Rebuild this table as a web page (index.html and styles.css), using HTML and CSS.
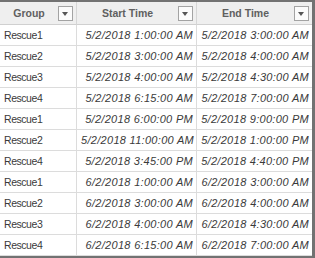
FILE: index.html
```html
<!DOCTYPE html>
<html lang="en">
<head>
    <meta charset="UTF-8">
    <title>Rescue schedule</title>
    <link rel="stylesheet" href="styles.css">
</head>
<body>
    <div class="frame">
        <div class="grid">
            <div class="head"><span class="label">Group</span><span class="drop"></span></div>
            <div class="head"><span class="label">Start Time</span><span class="drop"></span></div>
            <div class="head last"><span class="label">End Time</span><span class="drop"></span></div>

            <div class="cell">Rescue1</div><div class="cell date">5/2/2018 1:00:00 AM</div><div class="cell date last">5/2/2018 3:00:00 AM</div>
            <div class="cell">Rescue2</div><div class="cell date">5/2/2018 3:00:00 AM</div><div class="cell date last">5/2/2018 4:00:00 AM</div>
            <div class="cell">Rescue3</div><div class="cell date">5/2/2018 4:00:00 AM</div><div class="cell date last">5/2/2018 4:30:00 AM</div>
            <div class="cell">Rescue4</div><div class="cell date">5/2/2018 6:15:00 AM</div><div class="cell date last">5/2/2018 7:00:00 AM</div>
            <div class="cell">Rescue1</div><div class="cell date">5/2/2018 6:00:00 PM</div><div class="cell date last">5/2/2018 9:00:00 PM</div>
            <div class="cell">Rescue2</div><div class="cell date">5/2/2018 11:00:00 AM</div><div class="cell date last">5/2/2018 1:00:00 PM</div>
            <div class="cell">Rescue4</div><div class="cell date">5/2/2018 3:45:00 PM</div><div class="cell date last">5/2/2018 4:40:00 PM</div>
            <div class="cell">Rescue1</div><div class="cell date">6/2/2018 1:00:00 AM</div><div class="cell date last">6/2/2018 3:00:00 AM</div>
            <div class="cell">Rescue2</div><div class="cell date">6/2/2018 3:00:00 AM</div><div class="cell date last">6/2/2018 4:00:00 AM</div>
            <div class="cell">Rescue3</div><div class="cell date">6/2/2018 4:00:00 AM</div><div class="cell date last">6/2/2018 4:30:00 AM</div>
            <div class="cell">Rescue4</div><div class="cell date">6/2/2018 6:15:00 AM</div><div class="cell date last">6/2/2018 7:00:00 AM</div>
        </div>
    </div>
</body>
</html>
```

FILE: styles.css
```css
body {
    margin: 0;
    font-family: "Liberation Sans", Arial, sans-serif;
    background: #fff;
}

.frame {
    width: 315px;
    height: 258px;
    box-sizing: border-box;
    border-top: 2px solid #727272;
    border-right: 3px solid #727272;
    border-bottom: 2px solid #727272;
    overflow: hidden;
}

.grid {
    display: grid;
    grid-template-columns: 77px 120px 115px;
    grid-auto-rows: 21px;
    grid-template-rows: 23px;
}

.head {
    display: flex;
    align-items: center;
    box-sizing: border-box;
    background: #efefef;
    border-right: 1px solid #d6d6d6;
    border-bottom: 1px solid #d0d0d0;
    padding-right: 3px;
}

.head .label {
    flex: 1;
    text-align: center;
    font-size: 10.5px;
    font-weight: bold;
    color: #606060;
}

.drop {
    position: relative;
    width: 15px;
    height: 15px;
    box-sizing: border-box;
    border: 1px solid #a3a3a3;
    background: #fbfbfb;
}

.drop::after {
    content: "";
    position: absolute;
    left: 3px;
    top: 5px;
    border-left: 3.5px solid transparent;
    border-right: 3.5px solid transparent;
    border-top: 4px solid #555;
}

.cell {
    box-sizing: border-box;
    border-right: 1px solid #dcdcdc;
    border-bottom: 1px solid #dcdcdc;
    padding: 0 4px;
    font-size: 10.5px;
    letter-spacing: -0.45px;
    line-height: 20px;
    color: #3a3a3a;
    white-space: nowrap;
}

.cell.date {
    font-size: 11px;
    font-style: italic;
    text-align: right;
    letter-spacing: 0.3px;
    padding-right: 3px;
}

.last {
    border-right: none;
}
```
